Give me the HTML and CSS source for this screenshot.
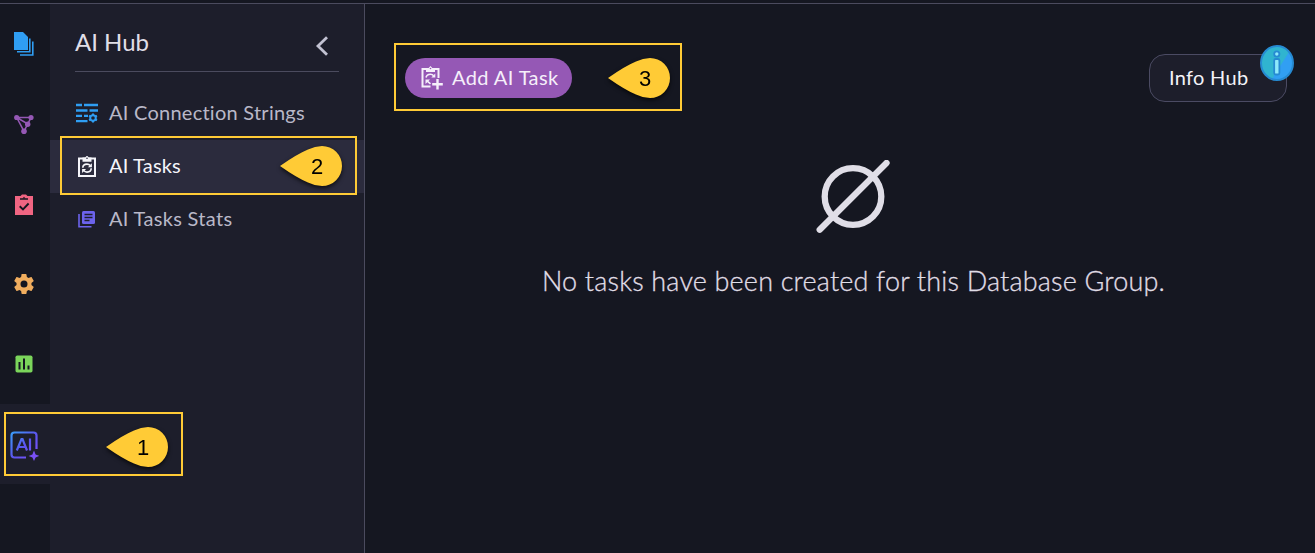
FILE: index.html
```html
<!DOCTYPE html>
<html lang="en">
<head>
<meta charset="utf-8">
<title>AI Hub</title>
<link rel="stylesheet" href="styles.css">
</head>
<body>
<div class="topbar"></div>
<div class="app">
  <nav class="rail">
    <a class="rail-item"><svg width="22" height="26" viewBox="0 0 22 26"><path fill="#2f9ef3" d="M1 1h9l5 5v13H1z"/><path fill="none" stroke="#2f9ef3" stroke-width="1.600" d="M16.800 7.500V20.800H4M19.800 10.500V24H7"/></svg></a>
    <a class="rail-item"><svg width="22" height="22" viewBox="0 0 22 22"><g fill="none" stroke="#9558b5" stroke-width="1.600"><path d="M3.700 4.500h14.400L14.700 11 3.700 4.500 11 18.300 14.700 11"/></g><g fill="#9558b5"><circle cx="3.700" cy="4.500" r="2.600"/><circle cx="18" cy="4.500" r="2.600"/><circle cx="14.700" cy="11.200" r="2.700"/><circle cx="11" cy="18.200" r="2.800"/></g></svg></a>
    <a class="rail-item"><svg width="22" height="24" viewBox="0 0 22 24"><path fill="#f06582" d="M2 4h5.500L9 2.500h4L14.500 4H20v19H2z"/><path fill="none" stroke="#151721" stroke-width="1.500" d="M7 7h8"/><path fill="#151721" d="M9.500 6.500L11 4.700l1.500 1.800z"/><path fill="none" stroke="#151721" stroke-width="1.900" d="M6.700 14.200l3.300 3.200 5.600-5.900"/></svg></a>
    <a class="rail-item"><svg width="24" height="24" viewBox="0 0 24 24"><path fill="#f0ad5e" d="M19.430 12.980c.04-.320.070-.640.070-.980s-.030-.660-.070-.980l2.110-1.650c.190-.150.240-.420.120-.640l-2-3.460c-.120-.220-.390-.300-.610-.220l-2.490 1c-.520-.400-1.080-.730-1.690-.980l-.380-2.650A.488.488 0 0 0 14 2h-4c-.250 0-.460.180-.490.420l-.380 2.650c-.610.250-1.170.590-1.690.980l-2.490-1c-.230-.090-.490 0-.610.220l-2 3.460c-.130.220-.070.490.120.640l2.110 1.650c-.040.320-.070.650-.070.980s.030.660.070.980l-2.110 1.650c-.190.150-.240.420-.120.640l2 3.460c.120.220.390.300.610.220l2.490-1c.520.400 1.080.730 1.690.980l.380 2.650c.030.240.240.420.490.420h4c.250 0 .460-.180.490-.420l.380-2.650c.610-.250 1.170-.590 1.690-.980l2.490 1c.230.090.490 0 .610-.220l2-3.460c.120-.220.070-.490-.120-.640zM12 15.500a3.500 3.500 0 1 1 0-7 3.500 3.500 0 0 1 0 7z"/></svg></a>
    <a class="rail-item"><svg width="18" height="18" viewBox="0 0 18 18"><rect x=".5" y=".5" width="17" height="17" rx="1.800" fill="#7bd55b"/><path stroke="#151721" stroke-width="2" d="M4.500 7v7.500M9 3.500v11M13.500 10.500v4"/></svg></a>
    <a class="rail-item rail-active"><svg width="30" height="30" viewBox="0 0 30 30"><defs><linearGradient id="ai" x1="0" y1="0" x2="30" y2="30" gradientUnits="userSpaceOnUse"><stop offset="0" stop-color="#35a7fa"/><stop offset=".5" stop-color="#5c55ef"/><stop offset="1" stop-color="#8950ff"/></linearGradient></defs><g fill="none" stroke="url(#ai)" stroke-width="2.200"><path d="M17 26.500H5.500Q2.500 26.500 2.500 23.500V4.500Q2.500 1.500 5.500 1.500h19Q27.500 1.500 27.500 4.500V18"/><path d="M7.800 19.500L12.500 8h1L18 19.500M9.400 16h7M21 7.500v12"/></g><path fill="#7950f4" d="M25 19.500l1.600 3.900 3.700 1.500-3.700 1.500L25 30l-1.600-3.600-3.800-1.500 3.800-1.500z"/></svg></a>
  </nav>
  <aside class="sidebar">
    <header class="side-head"><h1 class="side-title">AI Hub</h1><svg class="chevron" width="14" height="20" viewBox="0 0 14 20"><path fill="none" stroke="#c2c2d2" stroke-width="2.800" d="M12 1.300L3 10l9 8.700"/></svg></header>
    <ul class="menu">
      <li class="menu-item"><svg class="menu-icon" width="22" height="22" viewBox="0 0 22 22"><path fill="none" stroke="#2f9ef3" stroke-width="2.300" d="M0 2h6M8 2h14M0 7.500h11.500M13.500 7.500H22M0 12.800h6M8 12.800h4M0 18.200h11.500"/><circle cx="17" cy="15" r="2.800" fill="none" stroke="#2f9ef3" stroke-width="2"/><path stroke="#2f9ef3" stroke-width="2" d="M17 12v-1.500M17 18v1.500M14.400 13.500l-1.300-.8M19.600 16.500l1.300.8M14.400 16.500l-1.300.8M19.600 13.500l1.300-.8"/></svg><span class="label conn">AI Connection Strings</span></li>
      <li class="menu-item menu-active"><svg class="menu-icon" width="22" height="22" viewBox="0 0 22 22"><path fill="none" stroke="#f5f5fa" stroke-width="2" d="M3 2.500h16V20H3z"/><path fill="#f5f5fa" d="M6.500 1.500h2.700L11-.5l1.800 2h2.700v4.300h-9z"/><circle cx="11" cy="2.300" r=".8" fill="#2b2b3d"/><path fill="none" stroke="#f5f5fa" stroke-width="1.600" d="M6.800 11.800q0-3.700 4.200-3.700 2 0 3.300 1.500M15.200 12.300q0 3.800-4.200 3.800-2 0-3.300-1.500"/><path fill="#f5f5fa" d="M15.900 7.200v4h-4zM6.100 17v-4h4z"/></svg><span class="label tasks">AI Tasks</span></li>
      <li class="menu-item"><svg class="menu-icon" width="22" height="22" viewBox="0 0 22 22"><rect x="6" y="2" width="13" height="13" rx="1.500" fill="#6c63ec"/><path stroke="#1d1e2b" stroke-width="1.300" d="M8.500 5.500h8M8.500 8.500h8M8.500 11.500h5"/><path fill="none" stroke="#6c63ec" stroke-width="1.600" d="M3 5v12.700h12.500"/></svg><span class="label stats">AI Tasks Stats</span></li>
    </ul>
  </aside>
  <main class="main">
    <div class="toolbar">
      <button class="add"><svg width="24" height="24" viewBox="0 0 24 24"><path fill="none" stroke="#f5effa" stroke-width="2" d="M11.500 20.500H3.500V3h16V12"/><path fill="#f5effa" d="M7 2h2.700l1.800-2 1.800 2H16V6H7z"/><circle cx="11.500" cy="2.500" r=".8" fill="#9558b5"/><path fill="none" stroke="#f5effa" stroke-width="1.600" d="M7 11.500q.7-3.200 4.400-3.200 2 0 3.200 1.500M8 14.800l3.500 3"/><path fill="#f5effa" d="M16.300 7.500v4h-4zM6.500 18v-4.500H11z"/><path stroke="#f5effa" stroke-width="2.400" d="M18.500 13v10.500M13.200 18.300h10.600"/></svg><span class="add-label">Add AI Task</span></button>
      <button class="info"><span class="info-label">Info Hub</span><svg class="info-badge" width="34" height="36" viewBox="0 0 34 36"><ellipse cx="17" cy="18" rx="16" ry="17" fill="#30b4d0"/><path fill="#319ff3" d="M29 7Q34 15 32.500 22 29 34 19 35q-4 0-7-1z"/><ellipse cx="17" cy="18" rx="16" ry="17" fill="none" stroke="#268ad2" stroke-width="2"/><circle cx="16.800" cy="9" r="2.600" fill="#8ee9fb" stroke="#268ad2" stroke-width="1.800"/><rect x="14.200" y="14" width="5.200" height="15.500" rx="1.500" fill="#8ee9fb" stroke="#268ad2" stroke-width="1.800"/></svg></button>
    </div>
    <section class="empty">
      <svg class="empty-icon" width="74" height="74" viewBox="0 0 74 74"><g fill="none" stroke="#e0dee7" stroke-width="6.300"><circle cx="37" cy="36.500" r="28.300"/><path stroke-linecap="round" d="M3.700 69.700L70.500 3"/></g></svg>
      <p class="empty-text">No tasks have been created for this Database Group.</p>
    </section>
  </main>
</div>
<div class="mark mark-one"><svg class="pin" width="62" height="40" viewBox="0 0 62 40"><path d="M0 20Q17 8 28 3.500 35 0 42 0a20 20 0 0 1 0 40Q35 40 28 36.500 17 32 0 20z"/><text x="37" y="28">1</text></svg></div>
<div class="mark mark-two"><svg class="pin" width="62" height="40" viewBox="0 0 62 40"><path d="M0 20Q17 8 28 3.500 35 0 42 0a20 20 0 0 1 0 40Q35 40 28 36.500 17 32 0 20z"/><text x="37" y="28">2</text></svg></div>
<div class="mark mark-three"><svg class="pin" width="62" height="40" viewBox="0 0 62 40"><path d="M0 20Q17 8 28 3.500 35 0 42 0a20 20 0 0 1 0 40Q35 40 28 36.500 17 32 0 20z"/><text x="37" y="28">3</text></svg></div>
</body>
</html>
```
FILE: styles.css
```css
* { box-sizing: border-box; }
body { margin: 0; height: 553px; overflow: hidden; position: relative; background: #151721; color: #e0dee7; font-family: Lato, "Open Sans", sans-serif; font-variant-ligatures: none; }
.topbar { height: 4px; border-bottom: 1px solid #4b4b5e; }
.app { display: flex; height: 549px; }
.rail { width: 50px; }
.rail-item { height: 80px; padding-right: 2px; display: flex; align-items: center; justify-content: center; }
.rail-active { background: #1d1e2b; padding-top: 4px; }
.sidebar { width: 315px; background: #1d1e2b; border-right: 1px solid #4b4b5e; }
.side-head { height: 68px; margin: 0 25px; border-bottom: 1px solid #4b4b5e; display: flex; justify-content: space-between; padding: 23px 10px 0 0; }
.side-title { margin: 0; font-size: 24px; font-weight: 400; line-height: 30px; }
.chevron { margin-top: 9px; }
.menu { list-style: none; margin: 15px 0 0; padding: 0; }
.menu-item { height: 53px; padding-left: 26px; display: flex; align-items: center; gap: 11px; color: #b9b8c8; font-size: 20px; }
.menu-active { background: #2b2b3d; color: #f5f5fa; }
.label { white-space: nowrap; padding-bottom: 3px; }
.conn { letter-spacing: 0.25px; }
.tasks { letter-spacing: 0.15px; }
.stats { letter-spacing: 0.32px; }
.main { flex: 1; }
.toolbar { display: flex; justify-content: space-between; padding: 50px 28px 0 40px; height: 102px; }
.add, .info { font-family: inherit; font-size: 20px; font-variant-ligatures: none; display: flex; align-items: center; }
.add { margin-top: 4px; width: 167px; height: 40px; border: 0; border-radius: 20px; background: #9558b5; color: #f5effa; padding: 0 0 0 14px; gap: 9px; white-space: nowrap; }
.add-label { letter-spacing: 0.4px; padding-bottom: 2px; }
.info { position: relative; width: 138px; height: 48px; border: 1px solid #4b4b63; border-radius: 16px; background: #1d1e2b; color: #f3f2f8; padding: 0 0 0 19px; white-space: nowrap; }
.info-label { letter-spacing: 0.3px; padding-bottom: 2px; }
.info-badge { position: absolute; right: -8px; top: -10px; }
.empty { display: flex; flex-direction: column; align-items: center; padding: 54px 0 0 27px; }
.empty-icon { margin-right: 2px; }
.empty-text { margin: 27px 0 0; font-size: 27px; line-height: 40px; font-weight: 300; letter-spacing: 0.18px; white-space: nowrap; -webkit-text-stroke: 0.3px #e0dee7; }
.mark { position: absolute; border: 2px solid #ffcb36; }
.mark-one { left: 4px; top: 412px; width: 179px; height: 64px; }
.mark-two { left: 60px; top: 136px; width: 297px; height: 59px; }
.mark-three { left: 394px; top: 43px; width: 288px; height: 68px; }
.pin { position: absolute; right: 13px; top: 13px; overflow: visible; fill: #ffcb36; filter: drop-shadow(0 2px 2px rgba(0,0,0,.7)); }
.mark-two .pin { top: 8px; }
.mark-three .pin { right: 10px; }
.pin text { fill: #000; font: 22px "Liberation Sans", sans-serif; text-anchor: middle; }
```
